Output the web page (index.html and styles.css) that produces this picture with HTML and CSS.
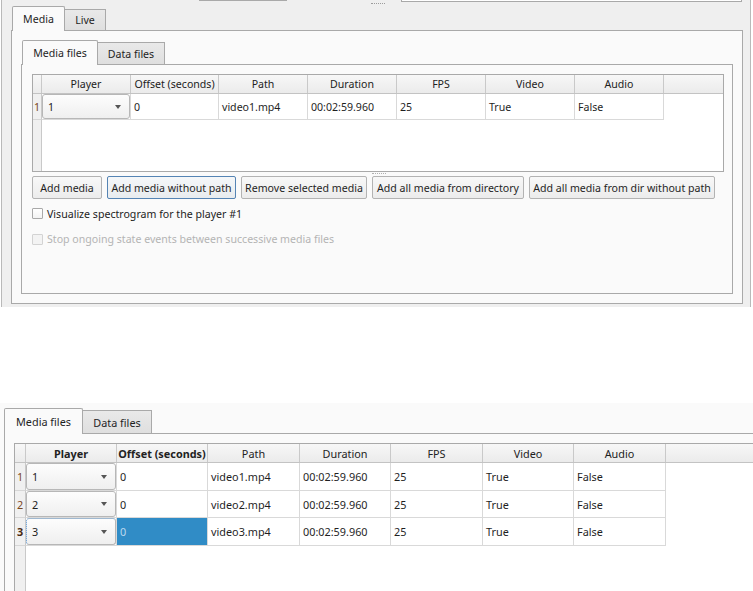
FILE: index.html
```html
<!DOCTYPE html>
<html lang="en">
	<head>
		<meta charset="UTF-8" />
		<meta name="viewport" content="width=device-width, initial-scale=1.0" />
		<title>Media files</title>
		<link rel="stylesheet" href="styles.css">
	</head>
	<body>
		<div class="win">
			<div class="clip">
				<span class="clip-btn"></span>
				<span class="clip-dots"></span>
				<span class="clip-box"></span>
			</div>
			<div class="tabbar outer-bar">
				<span class="tab on t-media">Media</span>
				<span class="tab t-live">Live</span>
			</div>
			<div class="pane outer-pane">
				<div class="tabbar inner-bar">
					<span class="tab on t-mf">Media files</span>
					<span class="tab t-df">Data files</span>
				</div>
				<div class="pane inner-pane">
					<div class="grid small">
						<div class="hrow">
							<span class="corner"></span>
							<span class="h c1">Player</span>
							<span class="h c2">Offset (seconds)</span>
							<span class="h c3">Path</span>
							<span class="h c4">Duration</span>
							<span class="h c5">FPS</span>
							<span class="h c6">Video</span>
							<span class="h c7">Audio</span>
						</div>
						<div class="drow">
							<span class="num">1</span>
							<span class="c c1"><span class="combo">1<i></i></span></span>
							<span class="c c2">0</span>
							<span class="c c3">video1.mp4</span>
							<span class="c c4">00:02:59.960</span>
							<span class="c c5">25</span>
							<span class="c c6">True</span>
							<span class="c c7">False</span>
						</div>
					</div>
					<div class="splitter"><span></span></div>
					<div class="buttons">
						<button class="btn b1">Add media</button>
						<button class="btn b2 focus">Add media without path</button>
						<button class="btn b3">Remove selected media</button>
						<button class="btn b4">Add all media from directory</button>
						<button class="btn b5">Add all media from dir without path</button>
					</div>
					<div class="checks">
						<label class="check"><span class="box"></span>Visualize spectrogram for the player #1</label>
						<label class="check off"><span class="box"></span>Stop ongoing state events between successive media files</label>
					</div>
				</div>
			</div>
		</div>

		<div class="shot2">
			<div class="tabbar bottom-bar">
				<span class="tab on t-mf2">Media files</span>
				<span class="tab t-df2">Data files</span>
			</div>
			<div class="pane bottom-pane">
				<div class="grid large">
					<div class="hrow">
						<span class="corner"></span>
						<span class="h c1 bold">Player</span>
						<span class="h c2 bold">Offset (seconds)</span>
						<span class="h c3">Path</span>
						<span class="h c4">Duration</span>
						<span class="h c5">FPS</span>
						<span class="h c6">Video</span>
						<span class="h c7">Audio</span>
					</div>
					<div class="drow r1">
						<span class="num">1</span>
						<span class="c c1"><span class="combo">1<i></i></span></span>
						<span class="c c2">0</span>
						<span class="c c3">video1.mp4</span>
						<span class="c c4">00:02:59.960</span>
						<span class="c c5">25</span>
						<span class="c c6">True</span>
						<span class="c c7">False</span>
					</div>
					<div class="drow r2">
						<span class="num">2</span>
						<span class="c c1"><span class="combo">2<i></i></span></span>
						<span class="c c2">0</span>
						<span class="c c3">video2.mp4</span>
						<span class="c c4">00:02:59.960</span>
						<span class="c c5">25</span>
						<span class="c c6">True</span>
						<span class="c c7">False</span>
					</div>
					<div class="drow r3">
						<span class="num bold">3</span>
						<span class="c c1"><span class="combo current">3<i></i></span></span>
						<span class="c c2 selected">0</span>
						<span class="c c3">video3.mp4</span>
						<span class="c c4">00:02:59.960</span>
						<span class="c c5">25</span>
						<span class="c c6">True</span>
						<span class="c c7">False</span>
					</div>
				</div>
			</div>
		</div>
	</body>
</html>
```

FILE: styles.css
```css
* {
	margin: 0;
	padding: 0;
	box-sizing: border-box;
}
body {
	width: 753px;
	height: 591px;
	overflow: hidden;
	background-color: #fff;
	color: #1f1f1f;
	font-family: "Noto Sans", "Open Sans", sans-serif;
	font-size: 10.6px;
}

/* top window */
.win {
	width: 750px;
	height: 307px;
	margin-left: 1px;
	border-left: 1px solid #b9b9b9;
	border-right: 1px solid #b9b9b9;
	background-color: #efefef;
}
.clip {
	display: flex;
	align-items: flex-start;
	height: 6px;
}
.clip-btn {
	width: 88px;
	height: 1px;
	margin-left: 197px;
	background-color: #a9a9a9;
}
.clip-dots {
	width: 14px;
	margin-left: 84px;
	margin-top: 3px;
	border-top: 1px dotted #9c9c9c;
}
.clip-box {
	width: 341px;
	height: 2px;
	margin-left: 16px;
	background-color: #fff;
	border: 1px solid #a9a9a9;
	border-top: 0;
}

/* tabs */
.tabbar {
	display: flex;
	align-items: flex-end;
}
.tab {
	display: flex;
	align-items: center;
	justify-content: center;
	border: 1px solid #a9a9a9;
	border-bottom: 0;
	border-left: 0;
	background: linear-gradient(#e9e9e9, #dfdfdf);
	color: #1f1f1f;
}
.tab.on {
	position: relative;
	z-index: 1;
	margin-bottom: -1px;
	border-left: 1px solid #a9a9a9;
	border-radius: 2px 2px 0 0;
	background: #fafafa;
}
.outer-bar {
	height: 24px;
	margin-left: 10px;
}
.t-media {
	width: 53px;
	height: 25px;
}
.t-live {
	width: 41px;
	height: 21px;
}
.inner-bar {
	height: 24px;
	margin-left: 1px;
}
.t-mf {
	width: 76px;
	height: 25px;
}
.t-df {
	width: 67px;
	height: 22px;
}

.pane {
	border: 1px solid #a9a9a9;
	background-color: #fafafa;
}
.outer-pane {
	width: 732px;
	height: 274px;
	margin-left: 9px;
	padding: 9px;
}
.inner-pane {
	width: 712px;
	height: 230px;
	padding: 9px 0 0 10px;
}

/* table views */
.grid {
	border: 1px solid #a9a9a9;
	overflow: hidden;
}
.grid.small {
	width: 692px;
	height: 98px;
	background: linear-gradient(to right, #f0f0f0 0 8px, #c9c9c9 8px 9px, #fff 9px);
}
.hrow {
	display: flex;
	height: 19px;
	border-bottom: 1px solid #c3c3c3;
	background: linear-gradient(#f7f7f7, #ebebeb);
	color: #222;
}
.corner {
	border-right: 1px solid #c9c9c9;
}
.h {
	display: flex;
	align-items: center;
	justify-content: center;
	border-right: 1px solid #c9c9c9;
	white-space: nowrap;
}
.drow {
	display: flex;
	height: 26px;
}
.num {
	display: flex;
	align-items: center;
	justify-content: center;
	border-right: 1px solid #c9c9c9;
	border-bottom: 1px solid #d6d6d6;
	background-color: #f0f0f0;
	color: #7a461c;
}
.c {
	display: flex;
	align-items: center;
	padding-left: 3px;
	border-right: 1px solid #d9d9d9;
	border-bottom: 1px solid #d9d9d9;
	background-color: #fff;
	white-space: nowrap;
}
.c.c1 {
	align-items: stretch;
	padding: 0;
}
.combo {
	display: flex;
	align-items: center;
	justify-content: space-between;
	width: 100%;
	padding: 0 8px 0 5px;
	border: 1px solid #b7b7b7;
	border-radius: 3px;
	background: linear-gradient(#fdfdfd, #efefef);
	color: #222;
}
.combo i {
	width: 0;
	height: 0;
	border-left: 3px solid transparent;
	border-right: 3px solid transparent;
	border-top: 4px solid #555;
}
.corner,
.small .num {
	width: 9px;
}
.small .c1 { width: 89px; }
.small .c2 { width: 88px; }
.small .c3,
.small .c4,
.small .c5,
.small .c6,
.small .c7 { width: 89px; }

.splitter {
	height: 3px;
}
.splitter span {
	display: block;
	width: 14px;
	margin-left: 340px;
	margin-top: 1px;
	border-top: 1px dotted #b0b0b0;
}

/* buttons and checks */
.buttons {
	display: flex;
	gap: 5px;
}
.btn {
	height: 23px;
	border: 1px solid #b3b3b3;
	border-radius: 2px;
	background: linear-gradient(#f8f8f8, #ececec);
	color: #1f1f1f;
	font: inherit;
	white-space: nowrap;
}
.btn.focus {
	border-color: #5584b4;
	background: linear-gradient(#f5f7f9, #e8ecef);
}
.b1 { width: 70px; }
.b2 { width: 129px; }
.b3 { width: 126px; }
.b4 { width: 152px; }
.b5 { width: 186px; }

.checks {
	margin-top: 2px;
}
.check {
	display: flex;
	align-items: center;
	gap: 4px;
	height: 25.5px;
	color: #222;
}
.box {
	width: 11px;
	height: 11px;
	border: 1px solid #a9a9a9;
	border-radius: 1px;
	background: linear-gradient(#fff, #f3f3f3);
}
.check.off {
	color: #b4b4b4;
}
.check.off .box {
	border-color: #d3d3d3;
	background: #f3f3f3;
}

/* second view */
.shot2 {
	height: 188px;
	margin-top: 96px;
	padding: 5px 0 0 4px;
	background-color: #fafafa;
	font-size: 10.85px;
	overflow: hidden;
}
.bottom-bar {
	height: 25px;
}
.t-mf2 {
	width: 79px;
	height: 26px;
}
.t-df2 {
	width: 69px;
	height: 23px;
}
.bottom-pane {
	width: 760px;
	height: 170px;
	padding: 9px 0 0 9px;
}
.grid.large {
	width: 760px;
	height: 170px;
	background: linear-gradient(to right, #f0f0f0 0 10px, #c9c9c9 10px 11px, #fff 11px);
}
.large .corner,
.large .num {
	width: 11px;
}
.large .r1,
.large .r3 {
	height: 28px;
}
.large .r2 {
	height: 27px;
}
.large .c1,
.large .c2,
.large .c4,
.large .c6 { width: 91px; }
.large .c3,
.large .c5,
.large .c7 { width: 92px; }
.bold {
	font-weight: bold;
}
.num.bold {
	color: #4a2a10;
}
.combo.current {
	border-left: 1px dotted #4f8fd0;
	border-top-color: #9fb8d0;
}
.c.selected {
	background-color: #308cc6;
	color: #bcd9ee;
}
```
